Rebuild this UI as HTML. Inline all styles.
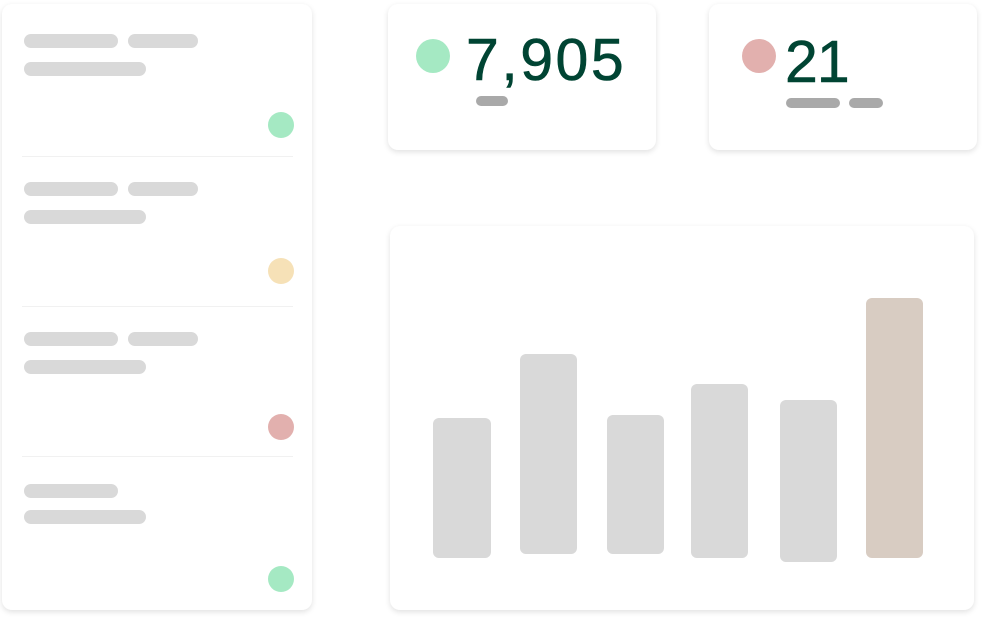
<!DOCTYPE html><html><head><style>
body{margin:0;width:986px;height:620px;background:#fff;position:relative;overflow:hidden;font-family:"Liberation Sans",sans-serif}
div{position:absolute;box-sizing:border-box}
.card{background:#fff;border-radius:10px;box-shadow:0 2px 6px rgba(0,0,0,.12)}
.g{background:#d9d9d9;border-radius:7px;height:14px}
.d{width:26px;height:26px;border-radius:50%}
.hr{left:22px;width:271px;height:1px;background:#f1f1f1}
.b{background:#d9d9d9;border-radius:6px}
.s{background:#a9a9a9;border-radius:5px;height:10px}
.n{font-size:59px;color:#004433;line-height:1;-webkit-text-stroke:0.6px #004433}
</style></head><body>
<div class="card" style="left:2px;top:4px;width:310px;height:606px"></div>
<div class="g" style="left:24px;top:34px;width:94px"></div><div class="g" style="left:128px;top:34px;width:70px"></div><div class="g" style="left:24px;top:62px;width:122px"></div>
<div class="d" style="left:268px;top:112px;background:#a5e9c3"></div>
<div class="hr" style="top:156px"></div>
<div class="g" style="left:24px;top:182px;width:94px"></div><div class="g" style="left:128px;top:182px;width:70px"></div><div class="g" style="left:24px;top:210px;width:122px"></div>
<div class="d" style="left:268px;top:258px;background:#f6e1b7"></div>
<div class="hr" style="top:306px"></div>
<div class="g" style="left:24px;top:332px;width:94px"></div><div class="g" style="left:128px;top:332px;width:70px"></div><div class="g" style="left:24px;top:360px;width:122px"></div>
<div class="d" style="left:268px;top:414px;background:#e2b0ae"></div>
<div class="hr" style="top:456px"></div>
<div class="g" style="left:24px;top:484px;width:94px"></div><div class="g" style="left:24px;top:510px;width:122px"></div>
<div class="d" style="left:268px;top:566px;background:#a5e9c3"></div>

<div class="card" style="left:388px;top:4px;width:268px;height:146px"></div>
<div style="left:416px;top:39px;width:34px;height:34px;border-radius:50%;background:#a5e9c3"></div>
<div class="n" style="left:466px;top:31px;letter-spacing:2.5px">7,905</div>
<div class="s" style="left:476px;top:96px;width:32px"></div>
<div class="card" style="left:709px;top:4px;width:268px;height:146px"></div>
<div style="left:742px;top:39px;width:34px;height:34px;border-radius:50%;background:#e2b0ae"></div>
<div class="n" style="left:785px;top:33px;letter-spacing:-1px">21</div>
<div class="s" style="left:786px;top:98px;width:54px"></div><div class="s" style="left:849px;top:98px;width:34px"></div>

<div class="card" style="left:390px;top:226px;width:584px;height:384px"></div>
<div class="b" style="left:433px;top:418px;width:58px;height:140px"></div>
<div class="b" style="left:520px;top:354px;width:57px;height:200px"></div>
<div class="b" style="left:607px;top:415px;width:57px;height:139px"></div>
<div class="b" style="left:691px;top:384px;width:57px;height:174px"></div>
<div class="b" style="left:780px;top:400px;width:57px;height:162px"></div>
<div class="b" style="left:866px;top:298px;width:57px;height:260px;background:#d8ccc2"></div>
</body></html>
